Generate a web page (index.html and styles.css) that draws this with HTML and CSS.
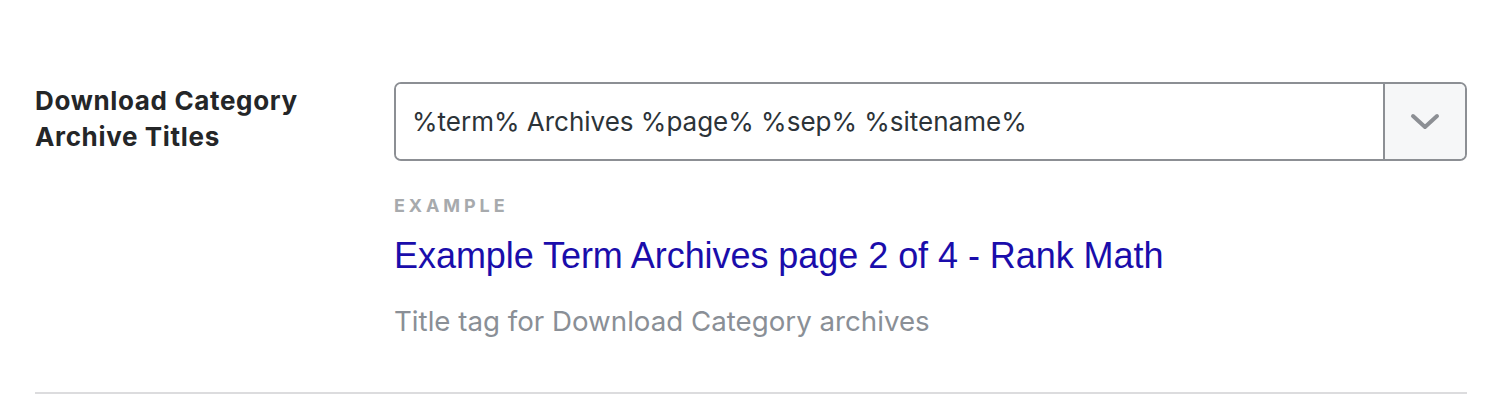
FILE: index.html
```html
<!DOCTYPE html>
<html lang="en">
<head>
    <meta charset="UTF-8">
    <meta name="viewport" content="width=device-width, initial-scale=1">
    <title>Titles &amp; Meta</title>
    <link rel="stylesheet" href="styles.css">
</head>
<body>
    <div class="settings">
        <div class="field-row">
            <div class="field-label">
                <label for="download-cat-title">Download Category Archive Titles</label>
            </div>
            <div class="field-body">
                <div class="select-input">
                    <input type="text" id="download-cat-title" value="%term% Archives %page% %sep% %sitename%">
                    <button class="select-toggle" type="button" aria-label="Insert variable">
                        <svg width="30" height="18" viewBox="0 0 30 18">
                            <path d="M3 3 L15 14 L27 3" fill="none" stroke="#8c8f94" stroke-width="4" stroke-linecap="round" stroke-linejoin="round"/>
                        </svg>
                    </button>
                </div>
                <div class="example-label">Example</div>
                <div class="example-title">Example Term Archives page 2 of 4 - Rank Math</div>
                <p class="field-desc">Title tag for Download Category archives</p>
            </div>
        </div>
    </div>
</body>
</html>
```

FILE: styles.css
```css
body {
    margin: 0;
    padding: 0;
    background-color: #fff;
    font-family: Inter, "Noto Sans", sans-serif;
    color: #242628;
}

.settings {
    padding: 82px 33px 0 35px;
}

.field-row {
    display: flex;
    padding-bottom: 53px;
    border-bottom: 2px solid #dcdcde;
}

.field-label {
    width: 359px;
    flex-shrink: 0;
}

.field-label label {
    display: block;
    width: 300px;
    margin-top: 1px;
    font-size: 26px;
    line-height: 36px;
    font-weight: 700;
    letter-spacing: 0.65px;
    color: #242628;
}

.field-body {
    flex: 1;
}

.select-input {
    display: flex;
    height: 79px;
    box-sizing: border-box;
    border: 2px solid #8c8f94;
    border-radius: 7px;
    overflow: hidden;
}

.select-input input {
    flex: 1;
    border: none;
    outline: none;
    padding: 0 16px;
    font-family: Inter, "Noto Sans", sans-serif;
    font-size: 26px;
    color: #2c3338;
    background: #fff;
}

.select-toggle {
    width: 82px;
    border: none;
    border-left: 2px solid #8c8f94;
    background-color: #f6f7f8;
    display: flex;
    align-items: center;
    justify-content: center;
    padding: 0;
    cursor: pointer;
}

.example-label {
    margin-top: 35px;
    font-size: 18px;
    line-height: 20px;
    font-weight: 700;
    letter-spacing: 3.9px;
    text-transform: uppercase;
    color: #a7aaad;
}

.example-title {
    margin-top: 18px;
    font-family: "Liberation Sans", Arial, sans-serif;
    font-size: 36px;
    line-height: 44px;
    letter-spacing: -0.05px;
    color: #1a0dab;
}

.field-desc {
    margin: 25px 0 0;
    font-size: 27.7px;
    line-height: 36px;
    color: #8a8f96;
}
```
